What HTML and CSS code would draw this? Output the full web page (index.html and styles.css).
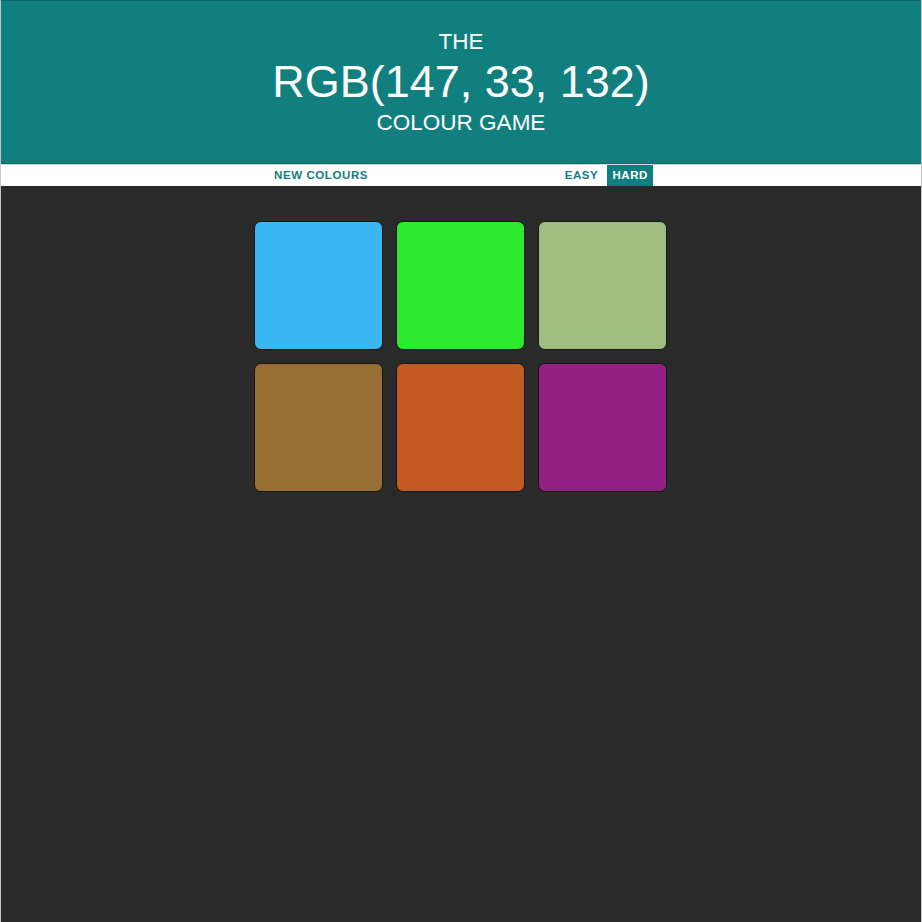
FILE: index.html
```html
<!DOCTYPE html>
<html lang="en">
<head>
<meta charset="utf-8">
<title>Colour Game</title>
<link rel="stylesheet" href="styles.css">
</head>
<body>
<div class="page">
  <header class="header">
    <h1 class="title">
      <span class="line">THE</span>
      <span class="line rgb">RGB(147, 33, 132)</span>
      <span class="line">COLOUR GAME</span>
    </h1>
  </header>
  <nav class="stripe">
    <div class="stripe-inner">
      <button class="btn">NEW COLOURS</button>
      <div class="modes">
        <button class="btn">EASY</button>
        <button class="btn selected">HARD</button>
      </div>
    </div>
  </nav>
  <main class="grid">
    <div class="square sq-blue"></div>
    <div class="square sq-green"></div>
    <div class="square sq-sage"></div>
    <div class="square sq-brown"></div>
    <div class="square sq-orange"></div>
    <div class="square sq-purple"></div>
  </main>
</div>
</body>
</html>
```
FILE: styles.css
```css
* { box-sizing: border-box; }
html, body { margin: 0; padding: 0; height: 100%; }
body {
  background: #2a2a2a;
  font-family: "Liberation Sans", Arial, sans-serif;
}
.page {
  min-height: 100%;
  border-left: 1px solid #c4c4c4;
  border-right: 1px solid #c4c4c4;
  background: #2a2a2a;
}
.header {
  background: #107f7e;
  color: #fff;
  text-align: center;
  padding: 27px 0 27px;
  border-top: 1px solid #0b6a69;
  border-bottom: 1px solid #0c6c6b;
}
.title {
  margin: 0;
  font-weight: normal;
  font-size: 22.5px;
  line-height: 1.2;
}
.line { display: block; }
.rgb { font-size: 45px; }
.stripe {
  background: #fff;
  height: 22px;
  border-top: 1px solid #d8d8d8;
}
.stripe-inner {
  width: 384px;
  margin: 0 auto;
  height: 100%;
  display: flex;
  justify-content: space-between;
}
.modes { display: flex; gap: 4px; }
.btn {
  border: none;
  background: #fff;
  color: #107f7e;
  font-family: "Liberation Sans", Arial, sans-serif;
  font-weight: bold;
  font-size: 11.5px;
  letter-spacing: 0.6px;
  padding: 0 5px;
  height: 100%;
  line-height: 21px;
  margin: 0;
}
.btn.selected {
  background: #107f7e;
  color: #fff;
}
.grid {
  width: 415px;
  margin: 35px auto 0;
  padding-right: 2px;
  display: grid;
  grid-template-columns: repeat(3, 129px);
  grid-auto-rows: 129px;
  gap: 13px;
}
.square {
  border: 1px solid #151515;
  border-radius: 7px;
}
.sq-blue { background: #3ab8f4; }
.sq-green { background: #2eea2f; }
.sq-sage { background: #9fbd7f; }
.sq-brown { background: #976f34; }
.sq-orange { background: #c25a22; }
.sq-purple { background: #932184; }
```
